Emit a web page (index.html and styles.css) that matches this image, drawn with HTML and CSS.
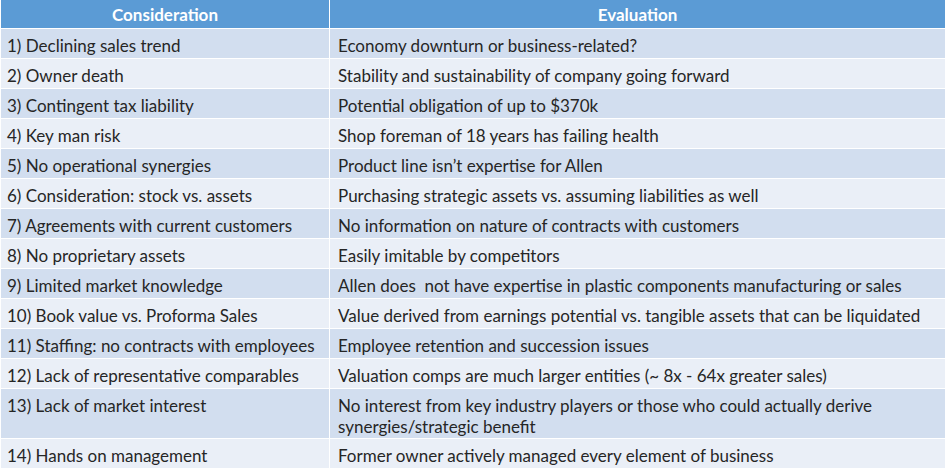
FILE: index.html
```html
<!DOCTYPE html>
<html>
<head>
<meta charset="utf-8">
<link rel="stylesheet" href="styles.css">
</head>
<body>
<table class="grid">
  <colgroup><col class="c1"><col class="c2"></colgroup>
  <thead>
    <tr><th>Consideration</th><th>Evaluation</th></tr>
  </thead>
  <tbody>
    <tr><td>1) Declining sales trend</td><td>Economy downturn or business-related?</td></tr>
    <tr><td>2) Owner death</td><td>Stability and sustainability of company going forward</td></tr>
    <tr><td>3) Contingent tax liability</td><td>Potential obligation of up to $370k</td></tr>
    <tr><td>4) Key man risk</td><td>Shop foreman of 18 years has failing health</td></tr>
    <tr><td>5) No operational synergies</td><td>Product line isn’t expertise for Allen</td></tr>
    <tr><td>6) Consideration: stock vs. assets</td><td>Purchasing strategic assets vs. assuming liabilities as well</td></tr>
    <tr><td>7) Agreements with current customers</td><td>No information on nature of contracts with customers</td></tr>
    <tr><td>8) No proprietary assets</td><td>Easily imitable by competitors</td></tr>
    <tr><td>9) Limited market knowledge</td><td>Allen does &nbsp;not have expertise in plastic components manufacturing or sales</td></tr>
    <tr><td>10) Book value vs. Proforma Sales</td><td>Value derived from earnings potential vs. tangible assets that can be liquidated</td></tr>
    <tr><td>11) Staffing: no contracts with employees</td><td>Employee retention and succession issues</td></tr>
    <tr><td>12) Lack of representative comparables</td><td>Valuation comps are much larger entities (~ 8x - 64x greater sales)</td></tr>
    <tr class="tall"><td>13) Lack of market interest</td><td>No interest from key industry players or those who could actually derive synergies/strategic benefit</td></tr>
    <tr><td>14) Hands on management</td><td>Former owner actively managed every element of business</td></tr>
  </tbody>
</table>
</body>
</html>
```
FILE: styles.css
```css
html, body {
  margin: 0;
  padding: 0;
  background: #ffffff;
}
.grid {
  width: 945px;
  border-collapse: collapse;
  table-layout: fixed;
  font-family: Lato, "Liberation Sans", sans-serif;
  font-size: 17px;
  color: #262626;
}
.c1 { width: 329px; }
.c2 { width: 616px; }
.grid th, .grid td {
  border: 1px solid #ffffff;
  text-align: left;
  vertical-align: top;
  padding: 6px 7px 0 7px;
  line-height: 21px;
  height: 23px;
  box-sizing: content-box;
}
.grid th {
  background: #5b9bd5;
  color: #ffffff;
  font-weight: bold;
  text-align: center;
  height: 24px;
  padding-top: 4px;
  border-top: 0;
}
.grid td:first-child { padding-left: 6px; }
.grid td:last-child { padding-left: 8px; }
.grid tbody tr:nth-child(odd) td { background: #d2deef; }
.grid tbody tr:nth-child(even) td { background: #eaeff7; }
.grid tr.tall td { height: 43px; }
```
